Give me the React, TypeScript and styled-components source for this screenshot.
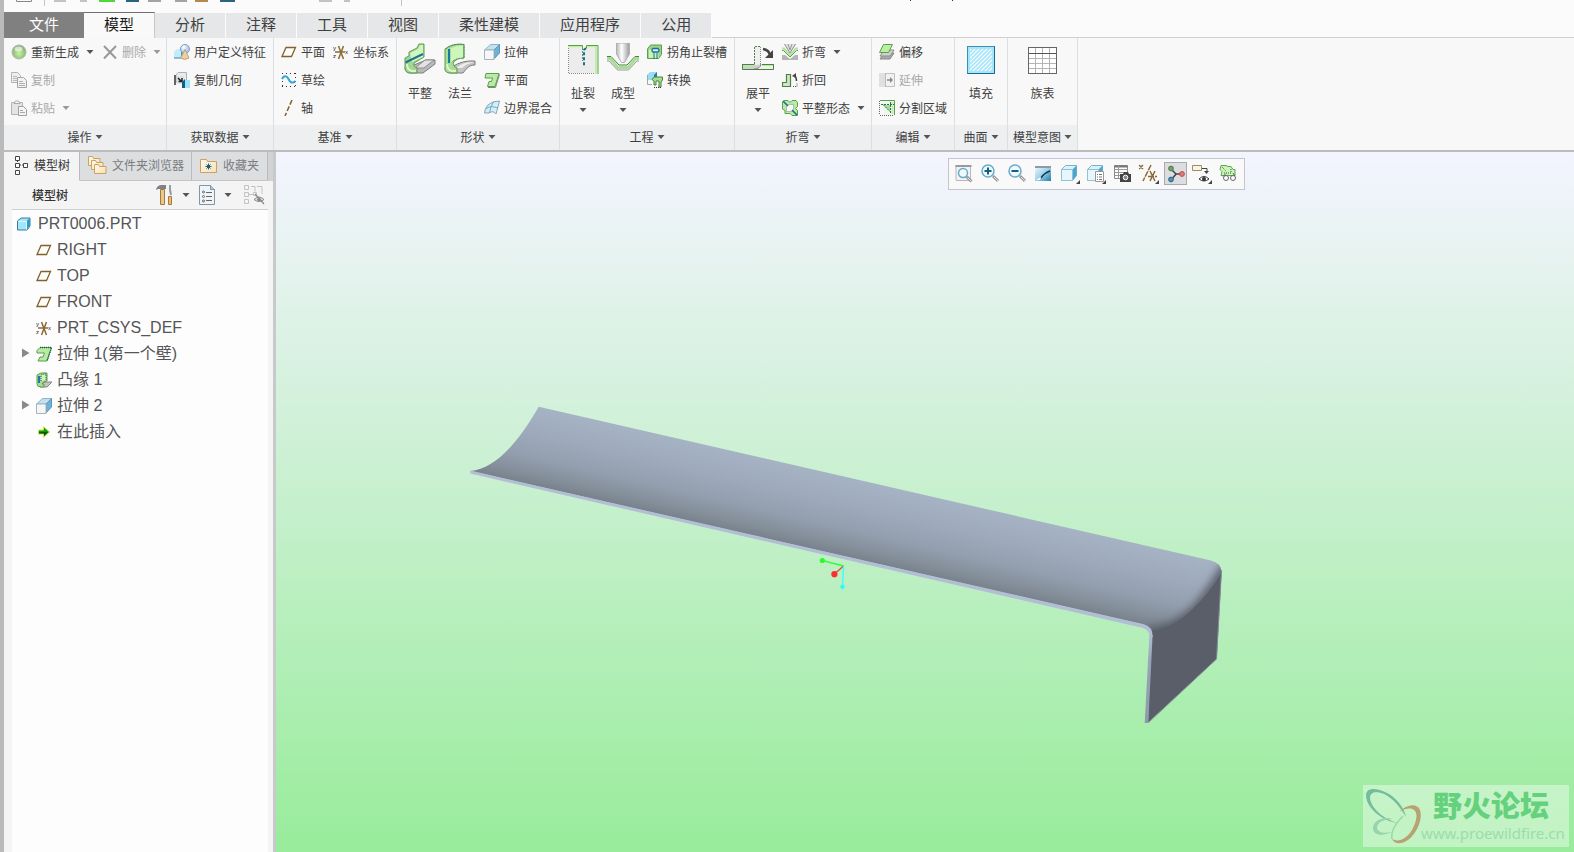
import React from 'react';
import styled, { createGlobalStyle, css } from 'styled-components';

const Global = createGlobalStyle`
  *, *::before, *::after { box-sizing: border-box; }
  body { margin: 0; background: #fbfbfb; }
  button { font: inherit; color: inherit; background: none; border: 0; padding: 0; margin: 0; cursor: default; white-space: nowrap; }
  ul { list-style: none; margin: 0; padding: 0; }
  svg { display: block; flex: none; }
`;

const Page = styled.div`
  display: flex;
  flex-direction: column;
  min-height: 100vh;
  overflow: hidden;
  border-left: 4px solid #bababa;
  background: #fbfbfb;
  color: #404040;
  font: 12px/16px 'Noto Sans CJK SC', 'Liberation Sans', sans-serif;
`;

const QuickAccess = styled.header`
  height: 12px;
  overflow: hidden;
`;

const TabBar = styled.nav`
  display: flex;
  height: 26px;
`;

const Tab = styled.button<{ $kind?: 'file' | 'active' }>`
  height: 26px;
  padding: 0 20px 4px;
  border-top: 1px solid #fbfbfb;
  border-right: 1px solid #fbfbfb;
  background: #e5e7e8;
  font-size: 15px;
  line-height: 20px;
  ${p => p.$kind === 'file' && css`
    padding: 0 25px 4px;
    border-width: 1px 0 0;
    border-color: #808080;
    background: #808080;
    color: #fff;
  `}
  ${p => p.$kind === 'active' && css`
    border-top-color: #6f6f6f;
    border-right-color: #c8c8c8;
    background: #f9f9f9;
    color: #1c1c1c;
  `}
`;

const TabFiller = styled.div`
  flex: 1;
  border-bottom: 1px solid #cfcfcf;
`;

const RibbonBar = styled.div`
  display: flex;
  height: 114px;
  background: #f8f8f8;
  border-bottom: 2px solid #bcbcbc;
`;

const Group = styled.section<{ $w: number }>`
  display: flex;
  flex-direction: column;
  flex: none;
  width: ${p => p.$w}px;
  border-right: 1px solid #dcdfe1;
`;

const GroupBody = styled.div<{ $pad?: number; $center?: boolean }>`
  display: flex;
  flex: 1;
  gap: 4px;
  padding-left: ${p => p.$pad ?? 7}px;
  justify-content: ${p => (p.$center ? 'center' : 'flex-start')};
`;

const GroupTitle = styled.button`
  display: flex;
  align-items: center;
  justify-content: center;
  gap: 3px;
  height: 25px;
  padding-bottom: 1px;
  background: #edeff0;
`;

const BigRow = styled.div`
  display: flex;
`;

const Stack = styled.div`
  display: flex;
  flex-direction: column;
`;

const Row = styled.div`
  display: flex;
  gap: 8px;
  height: 28px;
`;

const Command = styled.button`
  display: flex;
  align-items: center;
  gap: 4px;
  height: 28px;
  &:disabled { color: #a9a9a9; }
`;

const BigCommand = styled.button`
  display: flex;
  flex-direction: column;
  align-items: center;
  width: 40px;
  height: 80px;
  padding-top: 5px;
  line-height: 16px;
`;

const BigLabel = styled.span`
  margin: 10px 0 7px;
`;

const ArrowGap = styled.span`
  margin-left: 3px;
`;

const Workspace = styled.main`
  display: flex;
  flex: 1;
`;

const Sidebar = styled.aside`
  display: flex;
  flex-direction: column;
  flex: none;
  width: 272px;
  background: #f4f4f4;
  border-right: 3px solid #c8c9cb;
`;

const SideTabs = styled.div`
  display: flex;
  height: 29px;
  background: #d0d2d4;
`;

const SideTab = styled.button<{ $w: number; $active?: boolean }>`
  display: flex;
  align-items: center;
  gap: 5px;
  width: ${p => p.$w}px;
  padding: 0 0 2px ${p => (p.$active ? 10 : 8)}px;
  background: ${p => (p.$active ? '#f4f4f4' : '#dcdee0')};
  color: ${p => (p.$active ? '#333' : '#7a7c80')};
  border-right: 1px solid #b9bbbd;
  border-bottom: 1px solid ${p => (p.$active ? '#f4f4f4' : '#c4c6c8')};
`;

const TreeHeader = styled.div`
  display: flex;
  align-items: center;
  height: 29px;
  margin: 0 5px 0 8px;
  padding: 0 3px 0 20px;
  border-bottom: 1px solid #cfcfcf;
`;

const TreeTitle = styled.h2`
  flex: 1;
  margin: 0;
  font-size: 12px;
  font-weight: 500;
  line-height: 16px;
  color: #333;
`;

const ToolButton = styled.button`
  display: flex;
  align-items: center;
  gap: 8px;
  margin-left: 9px;
`;

const Tree = styled.ul`
  flex: 1;
  margin: 0 5px 0 8px;
  background: #fdfdfd;
`;

const TreeItem = styled.li<{ $root?: boolean }>`
  display: flex;
  align-items: center;
  height: 26px;
  padding-left: ${p => (p.$root ? 5 : 10)}px;
  font-family: 'Liberation Sans', 'Noto Sans CJK SC', sans-serif;
  font-size: 16px;
  line-height: 24px;
  color: #555;
`;

const Expander = styled.button`
  width: 8px;
  height: 16px;
  margin-right: 6px;
`;

const TreeLabel = styled.button`
  display: flex;
  align-items: center;
  gap: 5px;
  height: 26px;
  padding-top: 1px;
`;

const Viewport = styled.section`
  position: relative;
  flex: 1;
  min-width: 0;
  background: linear-gradient(#f4f4ff, #98ec9b);
`;

const Scene = styled.svg`
  position: absolute;
  inset: 0;
  width: 100%;
  height: 100%;
`;

const ViewTools = styled.div`
  position: absolute;
  top: 6px;
  right: 329px;
  display: flex;
  justify-content: space-between;
  width: 297px;
  height: 32px;
  padding: 3px 4px 3px 3px;
  border: 1px solid #c4c6cd;
  background: #f9f9fa;
`;

const ViewButton = styled.button<{ $on?: boolean }>`
  display: flex;
  align-items: center;
  justify-content: center;
  width: 23px;
  height: 23px;
  border: 1px solid ${p => (p.$on ? '#a8aaad' : 'transparent')};
  background: ${p => (p.$on ? '#dcdde0' : 'transparent')};
`;

const Watermark = styled.div`
  position: absolute;
  right: 5px;
  bottom: 5px;
  display: flex;
  width: 206px;
  height: 62px;
  background: rgba(255, 255, 255, 0.4);
`;

const MarkText = styled.div`
  display: flex;
  flex-direction: column;
  font-size: 29px;
  font-weight: 900;
  line-height: 38px;
  color: #66d17d;
`;

const MarkName = styled.span`
  padding-left: 12px;
`;

const MarkUrl = styled.span`
  font: 15px/20px 'Noto Sans', sans-serif;
  color: #9cdcab;
`;

/* ---------- icons ---------- */

const GS = '#5f9c50';
const GD = '#4a8240';

type SvgProps = { s?: number; w?: number; h?: number; children: React.ReactNode };
const Svg = ({ s = 16, w, h, children }: SvgProps) => (
  <svg width={w ?? s} height={h ?? s} viewBox={`0 0 ${w ?? s} ${h ?? s}`} fill="none" aria-hidden="true">
    {children}
  </svg>
);

const Down = ({ color = '#555' }: { color?: string }) => (
  <Svg w={8} h={4}><path d="M.5 0h7L4 4z" fill={color} /></Svg>
);

const icons = {
  regen: (
    <Svg>
      <circle cx="8" cy="8" r="7" fill="url(#ball)" stroke="#b4bab0" />
      <ellipse cx="7.500" cy="5" rx="4" ry="2.500" fill="#fff" opacity=".6" />
    </Svg>
  ),
  remove: <Svg><path d="M2 2l12 12.500M14 2L2 14.500" stroke="#999" strokeWidth="2" /></Svg>,
  copy: (
    <Svg>
      <path d="M.5.5h6l3 3v7h-9z" fill="#eee" stroke="#b4b4b4" />
      <path d="M2 4.500h4M2 6.500h4M2 8.500h4" stroke="#bbb" />
      <path d="M6.500 5.500h6l3 3v7h-9z" fill="#f2f2f2" stroke="#a5a5a5" />
      <path d="M8 9.500h4M8 11.500h6M8 13.500h6" stroke="#b0b0b0" />
    </Svg>
  ),
  paste: (
    <Svg>
      <path d="M.5 2.500h11v12H.5z" fill="#e4e4e4" stroke="#b4b4b4" />
      <path d="M3 3.500L4.500 1h3L9 3.500z" fill="#f6f6f6" stroke="#aaa" />
      <path d="M7.500 6.500h5l3 3v6h-8z" fill="#f4f4f4" stroke="#a0a0a0" />
      <path d="M9 10.500h3M9 12.500h5" stroke="#aaa" />
    </Svg>
  ),
  udf: (
    <Svg>
      <path d="M0 7.500l3-2.500h7v6l-3 3H0z" fill="#c2ecfa" />
      <path d="M7 7.500L10 5v6l-3 3z" fill="#3d9bc6" />
      <path d="M0 14h7" stroke="#3d86a8" />
      <circle cx="11" cy="5" r="4.500" fill="url(#blueball)" stroke="#7d9bc6" />
      <path d="M11 5.500L6.500 14q4 3 8.500 0z" fill="#ecd0a0" stroke="#b5966a" strokeWidth=".8" />
    </Svg>
  ),
  copygeo: (
    <Svg>
      <path d="M2 3l2-2.500h8.500V8L11 10H2z" fill="#e9ebed" stroke="#b0b3b6" />
      <path d="M0 3h2v10H0z" fill="#5a6670" />
      <path d="M3 4h7v8H3z" fill="#e0e2e4" />
      <path d="M4 6l3 3M8 6v3.500H4.500" stroke="#222" strokeWidth="1.500" />
      <path d="M8 10l3-3v9H8z" fill="#125f86" />
      <path d="M11 8h5v8h-5z" fill="#9fe3fb" />
    </Svg>
  ),
  plane: <Svg><path d="M5 3.500h9.500l-4 9H1z" stroke="#80612f" strokeWidth="1.300" fill="#fffdf8" /></Svg>,
  csys: (
    <Svg>
      <path d="M2 8H12M5.500 2l5 13M10.500 2l-5 13" stroke="#8b6a35" strokeWidth="1.500" />
      <g fill="#222" fontFamily="Liberation Sans" fontSize="6">
        <text x="0" y="6">y</text>
        <text x="0" y="14">z</text>
        <text x="12" y="10">x</text>
      </g>
    </Svg>
  ),
  sketch: (
    <Svg>
      <path d="M1 1.500h14M1 14.500h14" stroke="#333" strokeDasharray="1 3" />
      <path d="M1.500 5v9M14.500 1v13" stroke="#333" strokeDasharray="1 3" />
      <path d="M1 7c2-4 5-3.500 6.500 0s4 5 7 2" stroke="#35a3d6" strokeWidth="2" />
    </Svg>
  ),
  axis: <Svg><path d="M11 0L4 16" stroke="#80612f" strokeWidth="1.500" strokeDasharray="5 2" /></Svg>,
  flatWall: (
    <Svg s={32}>
      <path d="M10 22l12-5h9v4L19 30H6q-5 0-5-6z" fill="#b9b9b9" stroke="#7c7c7c" />
      <path d="M11 25l10-8h9l-10 8z" fill="#e2e2e2" stroke="#8c8c8c" />
      <path d="M1 25V15l4-2V9l8-4 2-4h5v13L10 20q-1 4 3 5v5H7q-6 0-6-5z" fill="#a3d692" stroke={GS} />
      <path d="M6 10l8-4 2-4h3v12L8 19z" fill="#cff5c0" />
      <path d="M1.500 19.500l4-2L19 11" stroke="#1e7394" strokeWidth="2" />
      <path d="M3 21q0 6 5 7h4" stroke="#d8f5cc" strokeWidth="2" />
    </Svg>
  ),
  flange: (
    <Svg s={32}>
      <path d="M8 24q10-7 23-6v4q-6-1-12 8H7q-6 0-6-5z" fill="#c4c4c4" stroke="#7c7c7c" />
      <path d="M12 25q8-7 18-6l-3 1q-5 1-9 5z" fill="#ececec" />
      <path d="M1 26V6Q8 0 20 1.500V15Q12 15 9 20q1 5 4 5v5H7q-6 0-6-4z" fill="#a9dc97" stroke={GS} />
      <path d="M7 5q6-3 12-2.500V15q-7 0-12 4z" fill="#cdf7ba" />
      <path d="M2 6Q9 0 20 1.500V15q-8 0-12 4" stroke="#4c8a60" strokeDasharray="2 1" />
      <path d="M5 6v14" stroke="#167ba5" strokeWidth="2" />
      <path d="M3 21q0 6 5 7h4" stroke="#d8f5cc" strokeWidth="2" />
    </Svg>
  ),
  extrude: (
    <Svg>
      <path d="M.5 6l6-5.500h9L10 6z" fill="#c2e2f0" stroke="#8fb4c8" />
      <path d="M10 6l5.500-5.500V9L10 15z" fill="#6cb3d6" stroke="#5d98b8" />
      <path d="M.5 6H10v9.500H.5z" fill="#f5f6f8" stroke="#a9b2b9" />
    </Svg>
  ),
  planar: (
    <Svg>
      <path d="M2 1.500h13l-4 13H3.500L5 9.500h2.500L8.500 6H1z" fill="#b6eda2" stroke={GS} />
      <path d="M4 15.500h7.500l4-13" stroke="#7d8a78" />
    </Svg>
  ),
  boundary: (
    <Svg>
      <path d="M4 5q4-4 11.500-4L12 14q-3-4-7-1H.5q0-4 3.500-8z" fill="#d5eef8" stroke="#8aa5b3" />
      <path d="M9.500 2Q6 7 5.500 13M2 9q4-4 12-1" stroke="#6caac9" />
    </Svg>
  ),
  rip: (
    <Svg s={32}>
      <path d="M2 5h26v25H2z" fill="#ececec" />
      <path d="M1.500 5v25.500H28" stroke="#8a8a8a" strokeDasharray="1 1" />
      <path d="M1 3.500h14M20 3.500h9V31" stroke="#bdf0a6" strokeWidth="2" />
      <path d="M1 2.500h14.500v3M19.500 5V2.500h11.500V31" stroke={GS} />
      <path d="M19 5l-2 2v16" stroke="#1d6d93" strokeWidth="2" strokeDasharray="3 2" />
      <path d="M15.500 5v13" stroke={GS} strokeDasharray="2 1" />
    </Svg>
  ),
  form: (
    <Svg s={32}>
      <path d="M9.500 0h13v11l-5 8.500h-3l-5-8.500z" fill="url(#metal)" stroke="#b0b0b0" />
      <path d="M0 13.500h4l8 8.500h8l8-8.500h4" stroke={GD} />
      <path d="M0 15.500h3l8 9h10l8-9h3" stroke="#a9dc95" strokeWidth="3" />
      <path d="M0 18h2l8.500 9h11l8.500-9h2" stroke="#999" />
    </Svg>
  ),
  relief: (
    <Svg>
      <path d="M.5 14.500V5l3-4h11v9.500l-3 4z" fill="#9bd488" stroke={GS} />
      <path d="M2 5.500h9.500V14H2z" fill="#c7f5b3" />
      <path d="M7 15V8.500M10 15V9" stroke="#19709a" />
      <path d="M6 8Q4 6 6 4.500h5Q13 6 11 8z" fill="#d7f0fa" stroke="#19709a" strokeWidth="1.400" />
    </Svg>
  ),
  convert: (
    <Svg>
      <path d="M0 3l3-3h7v8H0z" fill="#9bdcf5" />
      <path d="M7 3l3-3v8H7z" fill="#247ba4" />
      <path d="M.5 3v9.500H5" stroke="#9aa" />
      <path d="M5 7.500l2-2.500h8.500v3l-1.500 2v5h-2v-6H9v4H7V9z" fill="#a5de90" stroke={GD} />
      <path d="M7 15.500h8" stroke="#333" strokeDasharray="1 1" />
    </Svg>
  ),
  unbend: (
    <Svg s={32}>
      <path d="M.5 21.500h12V3.500h6v18h13v5H.5z" fill="#efefef" />
      <path d="M1 22h11q5 0 6-1-1 5-6 5H1z" fill="#cfcfcf" />
      <path d="M18.500 4v17" stroke="#888" strokeDasharray="1 1" />
      <path d="M1 22.500h11M20 22.500h11" stroke="#b8eca2" />
      <path d="M12.500 21V3.500h6" stroke={GD} strokeDasharray="2 1" />
      <path d="M.5 21.500h12M20 21.500h11.500M.5 21v5.500h31V21" stroke={GD} />
      <path d="M12 26q6 0 7-5" stroke="#777" />
      <path d="M21 6q6 1 7 6" stroke="#444" strokeWidth="2.500" />
      <path d="M31 7v8h-8z" fill="#444" />
    </Svg>
  ),
  bend: (
    <Svg>
      <path d="M0 11h3l5 4 5-4h3v5H0z" fill="#b4b4b4" />
      <path d="M2.500 0L8 9l5.500-9" fill="#e4e4e4" stroke="#8a8a8a" />
      <path d="M6 0l2 6 2-6" stroke="#999" />
      <path d="M0 4.500h2l6 6.500 6-6.500h2" stroke="#b2e29e" strokeWidth="2" />
      <path d="M0 6.500h1.500L8 13l6.500-6.500H16" stroke={GS} />
    </Svg>
  ),
  bendback: (
    <Svg>
      <path d="M.5 14.500v-4h4v-8h4v12z" fill="#d0e6c8" stroke={GD} strokeWidth="1.200" />
      <path d="M11 14.500h4v-4" stroke="#555" strokeDasharray="1 1" />
      <path d="M14.500 9q0-4-2-5" stroke="#444" strokeWidth="1.500" />
      <path d="M10 4l4-3v5z" fill="#444" />
    </Svg>
  ),
  flatform: (
    <Svg>
      <path d="M2 .5h4l2 2 2-2h4l1.500 2v4l-2 2 2 2v5H10l-2-2H3v-3L.5 9V2z" fill="#b5ec9f" stroke={GS} />
      <path d="M4.500 4.500h7v7h-7z" fill="#f4fbf2" stroke="#888" strokeDasharray="1 1" />
      <path d="M1 1l5 5M10 10l5 5" stroke="#1c6d9a" strokeWidth="1.500" />
    </Svg>
  ),
  offset: (
    <Svg>
      <path d="M4 9h11l-4 6H1l2-3z" fill="#aaa" stroke="#888" />
      <path d="M5 6h10l-4 6H1z" fill="#cfcfcf" stroke="#8f8f8f" />
      <path d="M4.500.5h9l-4 8h-9z" fill="#b9f09f" stroke={GS} />
    </Svg>
  ),
  extend: (
    <Svg>
      <path d="M.5 1.500h15v13H.5z" fill="#f2f2f2" stroke="#c0c0c0" />
      <path d="M0 1h6v14H0z" fill="#e0e0e0" />
      <path d="M6.500 1v14" stroke="#bbb" />
      <path d="M8 8h5" stroke="#888" strokeWidth="1.500" />
      <path d="M11 5l3 3-3 3z" fill="#888" />
    </Svg>
  ),
  split: (
    <Svg>
      <path d="M4 1h11v14H6L4 9z" fill="#eef8ea" />
      <path d="M4 5l7 7V5z" fill="#a4e08d" />
      <path d="M.5 1v14M1 15.500h14" stroke="#666" strokeDasharray="1 1" />
      <path d="M1 .5h14.500V15" stroke={GS} />
      <path d="M13.500 2v12" stroke="#bdf0a6" strokeWidth="2" />
      <path d="M4 4.500l7 7M11.500 2v12M2 4.500h13" stroke="#2c6d6a" strokeDasharray="2 1" />
    </Svg>
  ),
  fill: (
    <Svg s={32}>
      <rect x="2.500" y="3.500" width="27" height="27" fill="#a6e6fb" stroke="#3b8fb0" />
      <path d="M2.500 30.500h27v-27" stroke="#176a8e" />
      <rect x="5" y="6" width="22" height="22" fill="url(#hatch)" />
    </Svg>
  ),
  family: (
    <Svg s={32}>
      <rect x="1.500" y="4.500" width="28" height="26" fill="#fff" />
      <path d="M8.500 5v25M15.500 5v25M22.500 5v25M2 15.500h27M2 20.500h27M2 25.500h27" stroke="#b4b4b4" />
      <path d="M1.500 10.500h28" stroke="#555" />
      <rect x="1.500" y="4.500" width="28" height="26" stroke="#666" />
    </Svg>
  ),
  modelTree: (
    <Svg w={15} h={20}>
      <path d="M3.500 6v8M6 10h3" stroke="#444" strokeDasharray="1 1" />
      <path d="M1.500 1.500h4v4h-4zM1.500 8.500h4v4h-4zM1.500 15.500h4v4h-4zM9.500 8.500h4v4h-4z" stroke="#444" fill="#fff" />
    </Svg>
  ),
  folders: (
    <Svg w={19} h={20}>
      {[0, 1, 2].map(i => (
        <g key={i} transform={`translate(${i * 3} ${i * 4})`}>
          <path d="M.5 10.500v-9h4l1 2h6.500v7z" fill="url(#folder)" stroke="#c9a264" />
        </g>
      ))}
    </Svg>
  ),
  favorite: (
    <Svg w={18} h={17}>
      <path d="M.5 15.500v-13h6l1 2h9v11z" fill="url(#folder)" stroke="#c9a264" />
      <path d="M8.500 6.500v6M5.500 9.500h6M6.500 7.500l4 4M10.500 7.500l-4 4" stroke="#12627f" />
    </Svg>
  ),
  tools: (
    <Svg w={18} h={22}>
      <path d="M0 5q2-4 5-4h5v4H3q-2 0-3 1z" fill="#7d8287" />
      <path d="M4.500 5.500h4v15h-4z" fill="#ecc78a" stroke="#a27b40" />
      <path d="M13 1h2v4l1 6h-2l-1-4z" fill="#9a9fa4" />
      <path d="M12.500 12.500h3v8h-3z" fill="#eebb6a" stroke="#a27b40" />
    </Svg>
  ),
  listDoc: (
    <Svg w={17} h={20}>
      <path d="M.5.500h11l4 4v15H.5z" fill="#eef4f7" stroke="#7f97a5" />
      <path d="M11.500.500v4h4" fill="#b7ccd7" stroke="#7f97a5" />
      <g stroke="#666"><circle cx="4.500" cy="7" r="1" /><circle cx="4.500" cy="11.500" r="1" /><circle cx="4.500" cy="16" r="1" /><path d="M7 7.500h6M7 11.500h6M7 15.500h6" /></g>
    </Svg>
  ),
  hideTree: (
    <Svg w={24} h={20}>
      <g transform="translate(3 0)">
        <path d="M.5.500h4v4h-4zM.5 7.500h4v4h-4zM.5 14.500h4v4h-4zM9.500 7.500h3v3h-3zM7 1.500h4v5M13 1.500h5V9M5 9.500h4" stroke="#c2c2c2" />
        <path d="M10 14.500q5-5 10 0-5 4-10 0z" stroke="#8c8c8c" fill="#ddd" />
        <circle cx="15" cy="14.500" r="1.800" fill="#888" />
        <path d="M11 9l9 10" stroke="#888" strokeWidth="1.200" />
      </g>
    </Svg>
  ),
  part: (
    <Svg>
      <path d="M.5 5l3.500-3h9v8l-3 4h-9.500z" fill="#a3e6fa" stroke="#3a7d99" />
      <path d="M9.500 5l3.500-3v8l-3.500 4z" fill="#2e9dcb" />
      <path d="M1.500 5.500h8v8" stroke="#e6faff" />
    </Svg>
  ),
  firstWall: (
    <Svg>
      <path d="M1 4.500L4 1.500h11.500L11 15H2l2-4h3l1.500-4H1z" fill="#b6eda2" stroke={GS} />
      <path d="M4 1.500h11.500L11 15" stroke="#1c5d4a" strokeWidth="1.500" strokeDasharray="1 1" />
    </Svg>
  ),
  lip: (
    <Svg>
      <path d="M4 11l6-1h6l-5 5H4z" fill="#c4c4c4" stroke="#888" />
      <path d="M1 12V3q3-3 10-2v8q-4 0-5 3h2v3H5q-4 0-4-3z" fill="#a9dc97" stroke={GS} />
      <path d="M3 4v7" stroke="#167ba5" strokeWidth="2" />
      <path d="M5 9V3q2-1 5-1v6" stroke="#245" fill="#cdf7ba" strokeDasharray="1 1" />
    </Svg>
  ),
  insert: (
    <Svg>
      <path d="M2.500 6h5V2.500l6 5.500-6 5.500V10h-5z" fill="#0c9a12" stroke="#d8e84a" />
      <path d="M3 8h9l-4 4V9.500H3z" fill="#0a5a10" />
    </Svg>
  ),
};

const corner = <path d="M20 16v4h-4z" fill="#444" />;
const lens = (x: number, y: number, r: number) => (
  <>
    <path d={`M${x + r - 1} ${y + r - 1}l5 5`} stroke="#9a9a9a" strokeWidth="3" />
    <path d={`M${x + r} ${y + r}l4 4`} stroke="#e3e3e3" />
    <circle cx={x} cy={y} r={r} fill="#eef9fd" stroke="#6aabca" strokeWidth="1.500" />
  </>
);
const cube = (
  <>
    <path d="M1.500 5.500l4-4h11v10l-4 5h-11z" fill="#d9f2fb" stroke="#7db2ca" />
    <path d="M12.500 5.500l4-4v10l-4 5z" fill="#4aa5cf" />
    <path d="M1.500 5.500h11v11h-11z" fill="#e6f6fc" stroke="#8fc3da" />
  </>
);

const viewIcons: { name: string; on?: boolean; art: React.ReactNode }[] = [
  { name: '重新调整', art: <><path d="M2 1.500h14.500v15H2z" stroke="#b8b8b8" fill="#f2f2f2" /><path d="M1.500 2h16" stroke="#999" strokeWidth="2" />{lens(9, 9, 4.5)}</> },
  { name: '放大', art: <>{lens(8, 7, 6)}<path d="M4.500 7h7M8 3.500v7" stroke="#155f87" strokeWidth="2" /></> },
  { name: '缩小', art: <>{lens(8, 7, 6)}<path d="M4.500 7h7" stroke="#155f87" strokeWidth="2" /></> },
  { name: '重画', art: <><path d="M2 2h16v15H2z" fill="url(#repaint)" /><path d="M2 2h16v2H2z" fill="#8f9ba3" /><path d="M8 14q3-5 9-7" stroke="#12384c" strokeWidth="1.500" /><path d="M3 16l5-3-1 3z" fill="#fff" /></> },
  { name: '显示样式', art: <>{cube}{corner}</> },
  { name: '已保存方向', art: <>{cube}<path d="M9.500 7.500h8v10h-8z" fill="#fff" stroke="#999" /><path d="M11 10.500h1M13 10.500h3M11 13h1M13 13h3M11 15.500h1M13 15.500h3" stroke="#777" />{corner}</> },
  { name: '视图管理器', art: <><path d="M1.500 1.500h13v13h-13z" fill="#fff" stroke="#888" /><path d="M1.500 2.500h13" stroke="#777" strokeWidth="2" /><path d="M1.500 5.500h13M1.500 8.500h13M1.500 11.500h13M5.500 1.500v13" stroke="#999" /><path d="M7 10h3l1-2h4l1 2h2v8H7z" fill="#444" /><circle cx="12.500" cy="13.500" r="2.300" fill="#888" stroke="#fff" /></> },
  { name: '基准显示过滤器', art: <><path d="M0 1l4 4M4 1L0 5M12 1L4 17M9 12.500h9M11 7l5 10M16 7l-5 10" stroke="#8b6a35" strokeWidth="1.500" strokeDasharray="6 1" />{corner}</> },
  { name: '旋转中心', on: true, art: <><path d="M5 5l5 5-4 5M10 10h6" stroke="#444" strokeWidth="1.500" /><circle cx="5" cy="4.500" r="2.400" fill="#6fa36a" stroke="#4d7c49" /><circle cx="16" cy="10" r="2.400" fill="#e57a76" stroke="#b34e4b" /><circle cx="5" cy="15.500" r="2.400" fill="#4d8fb5" stroke="#2e6685" /></> },
  { name: '注释显示', art: <><path d="M.5 1.500h9v5h-9z" fill="#fbf5df" stroke="#9a8d6a" /><path d="M10 4.500h5V8" stroke="#444" /><path d="M12 7h5l-2.500 3z" fill="#444" /><path d="M7 15q5-5 10 0-5 4-10 0z" fill="#fff" stroke="#333" /><circle cx="12" cy="15" r="2" fill="#333" />{corner}</> },
  { name: '平整形态预览', art: <><path d="M2 1.500h5l2 1h3l2 3h2v6H2l1-4-2-2z" fill="#cdf2be" stroke="#5aa84c" /><path d="M3 3l4 4M5 9h7V5" stroke="#2b6a3a" strokeDasharray="1 1" /><circle cx="7" cy="14" r="2.500" fill="#fff" stroke="#666" /><circle cx="14" cy="14" r="2.500" fill="#fff" stroke="#666" /><path d="M4 12.500l3-3M16 12l-2-3" stroke="#666" /></> },
];

type IconName = keyof typeof icons;
type CmdProps = { icon: IconName; label: string; menu?: boolean; off?: boolean };

const Cmd = ({ icon, label, menu, off }: CmdProps) => (
  <Command type="button" disabled={off}>
    {icons[icon]}
    {label}
    {menu && <ArrowGap><Down color={off ? '#999' : '#555'} /></ArrowGap>}
  </Command>
);

const Big = ({ icon, label, menu }: CmdProps) => (
  <BigCommand type="button">
    {icons[icon]}
    <BigLabel>{label}</BigLabel>
    {menu && <Down />}
  </BigCommand>
);

const Title = ({ children }: { children: React.ReactNode }) => (
  <GroupTitle type="button">{children}<Down /></GroupTitle>
);

const HiddenDefs = styled.svg`
  position: absolute;
`;

const Defs = () => (
  <HiddenDefs width="0" height="0" aria-hidden="true">
    <defs>
      <radialGradient id="ball" cx=".5" cy=".6"><stop offset="0" stopColor="#c8f2a6" /><stop offset=".6" stopColor="#9fd27e" /><stop offset="1" stopColor="#8fae83" /></radialGradient>
      <radialGradient id="blueball" cx=".35" cy=".3"><stop offset="0" stopColor="#fff" /><stop offset="1" stopColor="#b3cbee" /></radialGradient>
      <linearGradient id="metal"><stop offset="0" stopColor="#b5b5b5" /><stop offset=".4" stopColor="#fff" /><stop offset="1" stopColor="#9a9a9a" /></linearGradient>
      <linearGradient id="folder" x2="1" y2="1"><stop offset="0" stopColor="#fffaf0" /><stop offset="1" stopColor="#f9dfae" /></linearGradient>
      <linearGradient id="repaint" x2="1" y2="1"><stop offset="0" stopColor="#f4fafd" /><stop offset=".5" stopColor="#9fd2ea" /><stop offset="1" stopColor="#1f7ba6" /></linearGradient>
      <pattern id="hatch" width="4" height="4" patternUnits="userSpaceOnUse"><path d="M-1 1l2-2M0 4l4-4M3 5l2-2" stroke="#fff" strokeWidth="1.200" /></pattern>
    </defs>
  </HiddenDefs>
);

const tree: { icon: IconName; label: string; open?: boolean }[] = [
  { icon: 'part', label: 'PRT0006.PRT' },
  { icon: 'plane', label: 'RIGHT' },
  { icon: 'plane', label: 'TOP' },
  { icon: 'plane', label: 'FRONT' },
  { icon: 'csys', label: 'PRT_CSYS_DEF' },
  { icon: 'firstWall', label: '拉伸 1(第一个壁)', open: true },
  { icon: 'lip', label: '凸缘 1' },
  { icon: 'extrude', label: '拉伸 2', open: true },
  { icon: 'insert', label: '在此插入' },
];

const Model = () => (
  <Scene viewBox="276 152 1298 700" aria-label="PRT0006">
    <defs>
      <linearGradient id="sheet" gradientUnits="userSpaceOnUse" x1="800" y1="546" x2="817.300" y2="470.300">
        <stop offset="0" stopColor="#77828c" />
        <stop offset=".12" stopColor="#838e99" />
        <stop offset=".35" stopColor="#939fae" />
        <stop offset=".65" stopColor="#9eaabb" />
        <stop offset="1" stopColor="#a6b3c5" />
      </linearGradient>
      <linearGradient id="side" x1="0" y1="0" x2="0" y2="1">
        <stop offset="0" stopColor="#b0bcd2" />
        <stop offset=".3" stopColor="#98a5b7" />
        <stop offset="1" stopColor="#8e9aab" />
      </linearGradient>
      <filter id="soft" x="-20%" y="-20%" width="140%" height="140%"><feGaussianBlur stdDeviation="5" /></filter>
      <clipPath id="top">
        <path d="M538.700 406.700L1211 560.500Q1221 563 1221.500 572Q1207 596 1190 611Q1172 628 1151 630.500L1143 624.500L470.500 471C494 469 516 446 538.700 406.700z" />
      </clipPath>
    </defs>
    <path d="M1221.700 570L1216.700 659L1148 722.500L1151 628Q1178 630 1221.700 570z" fill="#595e69" />
    <g clipPath="url(#top)">
      <path d="M460 390H1240V650H460z" fill="url(#sheet)" />
      <path d="M1228 566Q1208 600 1193 614Q1172 633 1148 634" stroke="#535963" strokeWidth="12" fill="none" filter="url(#soft)" />
    </g>
    <path d="M1221.500 570L1216.500 659L1148.500 722.500" stroke="#828b98" strokeWidth="1" fill="none" />
    <path d="M470.300 470.600L1144 624.300Q1153 627 1152.600 637L1149.500 637Q1149.500 629.500 1142 627.800L470.300 473.600z" fill="#b1bed4" />
    <path d="M1152.600 635L1148.300 723H1144.700L1149.400 635z" fill="url(#side)" />
    <path d="M843.500 566L822 560.500" stroke="#3f3" strokeWidth="1.300" />
    <path d="M843.500 566L834.500 574" stroke="#e04a30" strokeWidth="1.300" />
    <path d="M843.500 566L842.500 587" stroke="#3ff" strokeWidth="1.300" />
    <circle cx="822.300" cy="560.500" r="2.600" fill="#2bfb2b" />
    <circle cx="834.400" cy="574.200" r="3.100" fill="#fb2f2f" />
    <circle cx="842.500" cy="586.700" r="2.200" fill="#2bfbfb" />
  </Scene>
);

export default function App() {
  return (
    <Page>
      <Global />
      <Defs />
      <QuickAccess>
        <Svg w={960} h={8}>
          <path d="M12.500 0v1.500h15V0M50 1h12M76 1h7M315 1h13M340 1h6" stroke="#8a8a8a" />
          <path d="M95 1h16" stroke="#4fd83a" strokeWidth="2" />
          <path d="M122 1h13M216 1h15" stroke="#2b6482" strokeWidth="2" />
          <path d="M144 1h13M171 1h12" stroke="#a0a4a6" strokeWidth="2" />
          <path d="M191 1h13" stroke="#b48a4c" strokeWidth="2" />
          <path d="M40.500 0v6M397.500 0v6" stroke="#c4c4c4" />
          <path d="M906 0l1 1M949 0l-1 1" stroke="#333" />
        </Svg>
      </QuickAccess>
      <TabBar>
        <Tab $kind="file" type="button">文件</Tab>
        <Tab $kind="active" type="button">模型</Tab>
        {['分析', '注释', '工具', '视图', '柔性建模', '应用程序', '公用'].map(t => (
          <Tab key={t} type="button">{t}</Tab>
        ))}
        <TabFiller />
      </TabBar>
      <RibbonBar>
        <Group $w={163}>
          <GroupBody>
            <Stack>
              <Row>
                <Cmd icon="regen" label="重新生成" menu />
                <Cmd icon="remove" label="删除" menu off />
              </Row>
              <Cmd icon="copy" label="复制" off />
              <Cmd icon="paste" label="粘贴" menu off />
            </Stack>
          </GroupBody>
          <Title>操作</Title>
        </Group>
        <Group $w={107}>
          <GroupBody>
            <Stack>
              <Cmd icon="udf" label="用户定义特征" />
              <Cmd icon="copygeo" label="复制几何" />
            </Stack>
          </GroupBody>
          <Title>获取数据</Title>
        </Group>
        <Group $w={123}>
          <GroupBody>
            <Stack>
              <Row>
                <Cmd icon="plane" label="平面" />
                <Cmd icon="csys" label="坐标系" />
              </Row>
              <Cmd icon="sketch" label="草绘" />
              <Cmd icon="axis" label="轴" />
            </Stack>
          </GroupBody>
          <Title>基准</Title>
        </Group>
        <Group $w={163}>
          <GroupBody $pad={3}>
            <BigRow>
              <Big icon="flatWall" label="平整" />
              <Big icon="flange" label="法兰" />
            </BigRow>
            <Stack>
              <Cmd icon="extrude" label="拉伸" />
              <Cmd icon="planar" label="平面" />
              <Cmd icon="boundary" label="边界混合" />
            </Stack>
          </GroupBody>
          <Title>形状</Title>
        </Group>
        <Group $w={175}>
          <GroupBody $pad={3}>
            <BigRow>
              <Big icon="rip" label="扯裂" menu />
              <Big icon="form" label="成型" menu />
            </BigRow>
            <Stack>
              <Cmd icon="relief" label="拐角止裂槽" />
              <Cmd icon="convert" label="转换" />
            </Stack>
          </GroupBody>
          <Title>工程</Title>
        </Group>
        <Group $w={137}>
          <GroupBody $pad={3}>
            <Big icon="unbend" label="展平" menu />
            <Stack>
              <Cmd icon="bend" label="折弯" menu />
              <Cmd icon="bendback" label="折回" />
              <Cmd icon="flatform" label="平整形态" menu />
            </Stack>
          </GroupBody>
          <Title>折弯</Title>
        </Group>
        <Group $w={83}>
          <GroupBody>
            <Stack>
              <Cmd icon="offset" label="偏移" />
              <Cmd icon="extend" label="延伸" off />
              <Cmd icon="split" label="分割区域" />
            </Stack>
          </GroupBody>
          <Title>编辑</Title>
        </Group>
        <Group $w={53}>
          <GroupBody $pad={0} $center><Big icon="fill" label="填充" /></GroupBody>
          <Title>曲面</Title>
        </Group>
        <Group $w={70}>
          <GroupBody $pad={0} $center><Big icon="family" label="族表" /></GroupBody>
          <Title>模型意图</Title>
        </Group>
      </RibbonBar>
      <Workspace>
        <Sidebar>
          <SideTabs>
            <SideTab $w={76} $active type="button">{icons.modelTree}模型树</SideTab>
            <SideTab $w={112} type="button">{icons.folders}文件夹浏览器</SideTab>
            <SideTab $w={76} type="button">{icons.favorite}收藏夹</SideTab>
          </SideTabs>
          <TreeHeader>
            <TreeTitle>模型树</TreeTitle>
            <ToolButton type="button" aria-label="设置">{icons.tools}<Down /></ToolButton>
            <ToolButton type="button" aria-label="显示">{icons.listDoc}<Down /></ToolButton>
            <ToolButton type="button" aria-label="隐藏" disabled>{icons.hideTree}</ToolButton>
          </TreeHeader>
          <Tree>
            {tree.map((n, i) => (
              <TreeItem key={n.label} $root={i === 0}>
                {i > 0 && (
                  <Expander as={n.open ? 'button' : 'span'} aria-label={n.open ? '展开' : undefined}>
                    {n.open && <Svg w={8} h={16}><path d="M0 3.500v9L7.500 8z" fill="#8a8a8a" /></Svg>}
                  </Expander>
                )}
                <TreeLabel type="button">{icons[n.icon]}{n.label}</TreeLabel>
              </TreeItem>
            ))}
          </Tree>
        </Sidebar>
        <Viewport>
          <Model />
          <ViewTools role="toolbar">
            {viewIcons.map(v => (
              <ViewButton key={v.name} type="button" aria-label={v.name} $on={v.on}>
                <Svg s={20}>{v.art}</Svg>
              </ViewButton>
            ))}
          </ViewTools>
          <Watermark>
            <Svg w={58} h={62}>
              <path fill="#74bd9c" d="M35 38C22 37 3 24 3 10C3 3 12 2 22 7C33 12 41 22 43 32C37 22 30 13 21 9C13 6 7 7 7 13C8 23 20 34 35 38z" />
              <path fill="#98d3ad" d="M30 34C20 31 10 36 10 43C10 50 18 52 29 47C20 49 14 47 14 42C15 37 21 34 30 34z" />
              <path fill="#b8a274" d="M36 27C44 19 54 18 57 25C60 34 54 48 45 55C39 59 32 60 29 54C36 58 44 53 49 45C54 36 55 28 51 25C47 22 41 24 36 27z" />
              <path d="M29 54Q27 44 40 31" stroke="#9ad9a3" strokeWidth="1.500" />
            </Svg>
            <MarkText>
              <MarkName>野火论坛</MarkName>
              <MarkUrl>www.proewildfire.cn</MarkUrl>
            </MarkText>
          </Watermark>
        </Viewport>
      </Workspace>
    </Page>
  );
}
